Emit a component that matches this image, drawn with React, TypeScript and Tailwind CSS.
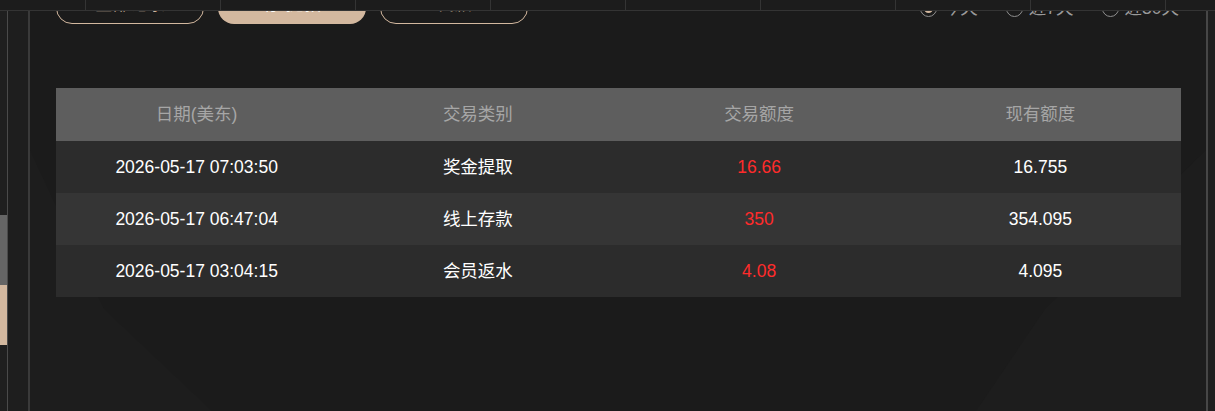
import { useState } from "react";

const rows = [
  { date: "2026-05-17 07:03:50", type: "奖金提取", amount: "16.66", balance: "16.755" },
  { date: "2026-05-17 06:47:04", type: "线上存款", amount: "350", balance: "354.095" },
  { date: "2026-05-17 03:04:15", type: "会员返水", amount: "4.08", balance: "4.095" },
];

const tabs = ["全部记录", "存/提款", "代派"];
const ranges = ["今天", "近7天", "近30天"];

export default function App() {
  const [tab, setTab] = useState(1);
  const [range, setRange] = useState(0);

  return (
    <div
      className="relative flex w-[1215px] h-[411px] overflow-hidden bg-[#1b1b1b] text-white"
      style={{ fontFamily: '"Liberation Sans", Arial, "Noto Sans CJK SC", sans-serif' }}
    >
      {/* left rail */}
      <div className="flex w-[8px] flex-col border-r border-[#4a4a4a] bg-[#1f1f1f]">
        <div className="h-[215px]" />
        <div className="h-[70px] bg-[#656565]" />
        <div className="h-[60px] bg-[#d3b89f]" />
      </div>
      <div className="w-[22px] border-r-2 border-[#3a3a3a] bg-[#1e1e1e]" />

      {/* main panel */}
      <div className="relative flex-1 border-r-2 border-[#474747]">
        {/* faint background shapes */}
        <svg className="absolute inset-0 h-full w-full" viewBox="0 0 1176 411" preserveAspectRatio="none">
          <polygon points="0,150 74,309 182,411 0,411" fill="#1d1d1d" />
          <polygon points="1015,309 1176,150 1176,411 946,411" fill="#1d1d1d" />
        </svg>

        <div className="relative flex flex-col pl-[26px] pr-[25px]">
          {/* tabs + ranges */}
          <div className="-mt-[16px] flex h-[40px] items-center justify-between">
            <div className="flex gap-[14px]">
              {tabs.map((t, i) => (
                <button
                  key={t}
                  onClick={() => setTab(i)}
                  className={
                    i === tab
                      ? "h-[40px] w-[148px] rounded-[16px] bg-[#d3b89f] text-[17.5px] text-white"
                      : "h-[40px] w-[148px] rounded-[16px] border border-[#d3b89f] text-[17.5px] text-[#d3b89f]"
                  }
                >
                  {t}
                </button>
              ))}
            </div>
            <div className="mr-[2px] flex gap-[28px] pt-[8px]">
              {ranges.map((r, i) => (
                <label key={r} onClick={() => setRange(i)} className="flex items-center gap-[6px] text-[17.5px] text-[#9a9a9a]">
                  <span className="flex h-[17px] w-[17px] items-center justify-center rounded-full border border-[#8f8f8f]">
                    {i === range && <span className="h-[9px] w-[9px] rounded-full bg-[#d3b89f]" />}
                  </span>
                  {r}
                </label>
              ))}
            </div>
          </div>

          {/* table */}
          <div className="mt-[64px] w-[1125px] text-[17.5px]">
            <div className="grid h-[53px] grid-cols-4 items-center bg-[#5e5e5e] text-center text-[#a6a6a6]">
              <div>日期(美东)</div>
              <div>交易类别</div>
              <div>交易额度</div>
              <div>现有额度</div>
            </div>
            {rows.map((r, i) => (
              <div
                key={r.date}
                className={
                  i % 2 === 1
                    ? "grid h-[52px] grid-cols-4 items-center bg-[#353535] text-center"
                    : "grid h-[52px] grid-cols-4 items-center bg-[#2c2c2c] text-center"
                }
              >
                <div>{r.date}</div>
                <div>{r.type}</div>
                <div className="text-[#ff2b2b]">{r.amount}</div>
                <div>{r.balance}</div>
              </div>
            ))}
          </div>
        </div>
      </div>
      <div className="w-[7px] bg-[#1f1f1f]" />

      {/* top bar laid over the scrolled content */}
      <div className="absolute left-0 top-0 flex h-[11px] w-full border-b border-[#343434] bg-[#1c1c1c] pl-[85px]">
        {Array.from({ length: 9 }).map((_, i) => (
          <div key={i} className="h-full w-[135px] shrink-0 border-l border-[#343434]" />
        ))}
      </div>
    </div>
  );
}
